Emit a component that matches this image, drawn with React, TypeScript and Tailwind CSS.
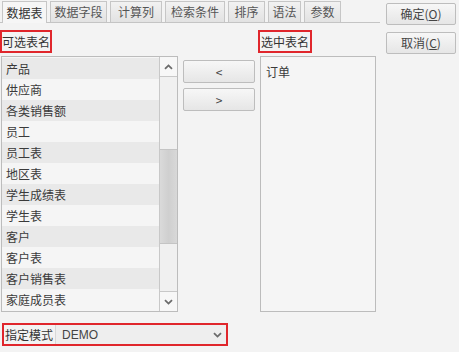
import React from "react"

const tabs = [
  { label: "数据表", w: "w-[45px]" },
  { label: "数据字段", w: "w-[57px]" },
  { label: "计算列", w: "w-[52px]" },
  { label: "检索条件", w: "w-[60px]" },
  { label: "排序", w: "w-[37px]" },
  { label: "语法", w: "w-[33px]" },
  { label: "参数", w: "w-[37px]" },
]

const tables = [
  "产品",
  "供应商",
  "各类销售额",
  "员工",
  "员工表",
  "地区表",
  "学生成绩表",
  "学生表",
  "客户",
  "客户表",
  "客户销售表",
  "家庭成员表",
]

const Chevron = ({ up = false }: { up?: boolean }) => (
  <svg width="9" height="6" viewBox="0 0 9 6" className={up ? "rotate-180" : ""}>
    <path d="M1 1.2 L4.5 4.6 L8 1.2" fill="none" stroke="#6b6b6b" strokeWidth="1.8" />
  </svg>
)

const Btn = ({ children, className = "" }: { children: React.ReactNode; className?: string }) => (
  <div
    className={`flex items-center justify-center rounded-[2px] border border-[#bdbdbd] bg-gradient-to-b from-[#f7f7f7] to-[#e6e6e6] text-[12px] text-[#444] ${className}`}>
    {children}
  </div>
)

export default function App() {
  return (
    <div className="h-[352px] w-[459px] overflow-hidden bg-[#f3f3f3] font-['Microsoft_YaHei','Noto_Sans_CJK_SC',sans-serif] text-[12px] leading-none text-[#3a3a3a]">
      <div className="flex">
        {/* left: tabs + panel */}
        <div className="w-[380px]">
          <div className="flex h-[22px] items-end gap-[3px] pl-[2px]">
            {tabs.map((t, i) => (
              <div
                key={t.label}
                className={`flex items-center justify-center border border-b-0 border-[#c6c6c6] ${t.w} ${
                  i === 0
                    ? "relative top-[1px] h-[22px] bg-[#f6f6f6] text-[#333]"
                    : "h-[21px] bg-gradient-to-b from-[#f2f2f2] to-[#e2e2e2] text-[#555]"
                }`}>
                {t.label}
              </div>
            ))}
          </div>
          <div className="border-t border-[#c4c4c4]">
            <div className="flex pl-[1px] pt-[7px]">
              {/* available tables */}
              <div className="w-[177px]">
                <div className="-ml-[1px] flex h-[23px] w-[52px] items-center justify-center border-2 border-[#e0262c] text-[#333]">
                  可选表名
                </div>
                <div className="mt-[3px] flex h-[256px] border border-[#bcbcbc] bg-[#f5f5f5]">
                  <div className="flex-1 overflow-hidden">
                    {tables.map((t, i) => (
                      <div
                        key={t}
                        className={`flex h-[21px] items-center pl-[4px] ${
                          i % 2 === 0 ? "bg-[#e9e9e9]" : "bg-[#f5f5f5]"
                        } ${i === 0 ? "mt-[1px]" : ""}`}>
                        {t}
                      </div>
                    ))}
                  </div>
                  <div className="flex w-[18px] flex-col border-l border-[#c8c8c8] bg-[#f0f0f0]">
                    <div className="flex h-[20px] items-center justify-center border-b border-[#c8c8c8] bg-[#f7f7f7]">
                      <Chevron up />
                    </div>
                    <div className="h-[72px]" />
                    <div className="h-[95px] border-y border-[#c4c4c4] bg-gradient-to-r from-[#dadada] via-[#cfcfcf] to-[#d8d8d8]" />
                    <div className="flex-1" />
                    <div className="flex h-[20px] items-center justify-center border-t border-[#c8c8c8] bg-[#f7f7f7]">
                      <Chevron />
                    </div>
                  </div>
                </div>
              </div>

              {/* move buttons */}
              <div className="ml-[5px] flex w-[72px] flex-col gap-[5px] pt-[30px]">
                <Btn className="h-[23px]">&lt;</Btn>
                <Btn className="h-[23px]">&gt;</Btn>
              </div>

              {/* selected tables */}
              <div className="ml-[5px] w-[116px]">
                <div className="-ml-[2px] flex h-[23px] w-[54px] items-center justify-center border-2 border-[#e0262c] text-[#333]">
                  选中表名
                </div>
                <div className="mt-[3px] h-[256px] border border-[#bcbcbc] bg-[#f5f5f5] pl-[5px] pt-[9px]">
                  订单
                </div>
              </div>
            </div>

            {/* schema selector */}
            <div className="ml-[2px] mt-[11px] flex h-[23px] w-[226px] items-center border-2 border-[#e0262c]">
              <div className="w-[51px] pl-[1px] text-[#333]">指定模式</div>
              <div className="flex h-full flex-1 items-center justify-between border-l border-[#d8d8d8] bg-[#eeeeee] pl-[6px] pr-[4px] font-['Liberation_Sans',sans-serif] text-[#444]">
                <span>DEMO</span>
                <Chevron />
              </div>
            </div>
          </div>
        </div>

        {/* right: dialog buttons */}
        <div className="ml-[6px] flex flex-col gap-[7px] pt-[3px]">
          <Btn className="h-[22px] w-[70px]">
            确定(<span className="underline">O</span>)
          </Btn>
          <Btn className="h-[22px] w-[70px]">
            取消(<span className="underline">C</span>)
          </Btn>
        </div>
      </div>
    </div>
  )
}
